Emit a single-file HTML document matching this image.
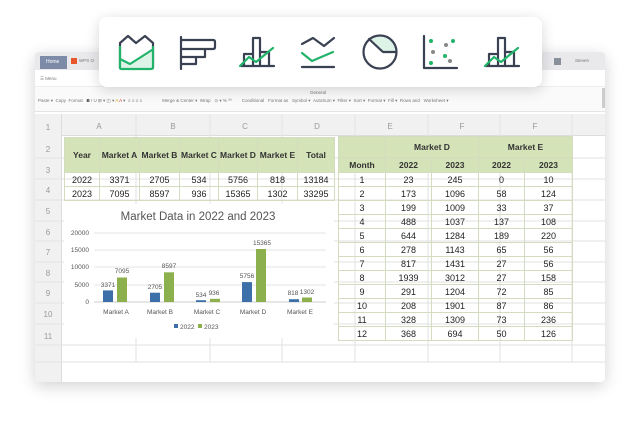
<!DOCTYPE html>
<html><head><meta charset="utf-8"><style>
*{margin:0;padding:0;box-sizing:border-box}
body{width:640px;height:427px;background:#fff;position:relative;overflow:hidden;font-family:"Liberation Sans",sans-serif}
.abs{position:absolute}
.win{left:35px;top:52px;width:570px;height:330px;background:#fff;border-radius:4px;box-shadow:0 4px 16px rgba(0,0,0,.18);overflow:hidden}
.tb{font-size:4.5px;color:#777;position:absolute;white-space:nowrap}
table{border-collapse:collapse;position:absolute;font-size:9px;color:#222;table-layout:fixed}
td{border:1px solid #d3dcc0;text-align:center;padding:0;height:14px;white-space:nowrap;overflow:hidden}
.g td{background:#d5e3b8;font-weight:bold;color:#333;font-size:8.5px}
</style></head><body>
<div class="abs win">
  <div class="abs" style="left:0;top:0;width:570px;height:18px;background:#e9e9ec"></div>
  <div class="abs" style="left:5px;top:4px;width:27px;height:13px;background:#7d8aa8;color:#fff;font-size:5px;padding:3px 0 0 6px">Home</div>
  <div class="abs" style="left:36px;top:6px;width:6px;height:6px;background:#e8572c"></div>
  <div class="tb" style="left:44px;top:6px">WPS O</div>
  <div class="abs" style="left:519px;top:6px;width:7px;height:7px;background:#8a8f9c"></div>
  <div class="tb" style="left:540px;top:6px">Steven</div>
  <div class="tb" style="left:5px;top:24px">☰ Menu</div>
  <div class="abs" style="left:0;top:34px;width:570px;height:26px;background:#fafafa;border-top:1px solid #eee;border-bottom:1px solid #e4e4e4"></div>
  <div class="tb" style="left:3px;top:46px">Paste ▾ &nbsp;Copy &nbsp;Format &nbsp;&nbsp;<b style="color:#222">B</b> I U ⊞ ▾ ◫ ▾ <span style="color:#d4a800">A</span> <span style="color:#d33">A</span> ▾ &nbsp;≡ ≡ ≡ ≡ &nbsp;&nbsp;&nbsp;&nbsp;&nbsp;&nbsp;&nbsp;&nbsp;&nbsp;&nbsp;&nbsp;&nbsp;&nbsp;&nbsp;&nbsp;Merge &amp; Center ▾ &nbsp;Wrap &nbsp;&nbsp;⊙ ▾ % ⁰⁰ &nbsp;&nbsp;&nbsp;&nbsp;&nbsp;&nbsp;&nbsp;Conditional &nbsp;&nbsp;Format as &nbsp;&nbsp;Symbol ▾ &nbsp;AutoSum ▾ &nbsp;Filter ▾ &nbsp;Sort ▾ &nbsp;Format ▾ &nbsp;Fill ▾ &nbsp;Rows and &nbsp;&nbsp;Worksheet ▾</div>
  <div class="tb" style="left:275px;top:38px">General</div>
  <div class="abs" style="left:567px;top:36px;width:3px;height:20px;background:#ccc"></div>
  <div class="abs" style="left:0;top:62px;width:570px;height:22px;background:#f1f1f1;border-bottom:1px solid #ddd"></div>
  <div class="abs" style="left:0;top:62px;width:27px;height:268px;background:#f1f1f1;border-right:1px solid #ddd"></div>
  <svg class="abs" style="left:0;top:0" width="570" height="330">
    <g stroke="#e2e2e2" stroke-width="1">
      <line x1="101" y1="62" x2="101" y2="310"/><line x1="175" y1="62" x2="175" y2="310"/><line x1="247" y1="62" x2="247" y2="310"/><line x1="320" y1="62" x2="320" y2="310"/><line x1="393" y1="62" x2="393" y2="310"/><line x1="465" y1="62" x2="465" y2="310"/><line x1="537" y1="62" x2="537" y2="310"/>
      <line x1="0" y1="106" x2="570" y2="106"/><line x1="0" y1="127" x2="570" y2="127"/><line x1="0" y1="148" x2="570" y2="148"/><line x1="0" y1="169" x2="570" y2="169"/><line x1="0" y1="189" x2="570" y2="189"/><line x1="0" y1="210" x2="570" y2="210"/><line x1="0" y1="230" x2="570" y2="230"/><line x1="0" y1="251" x2="570" y2="251"/><line x1="0" y1="272" x2="570" y2="272"/><line x1="0" y1="293" x2="570" y2="293"/><line x1="0" y1="310" x2="570" y2="310"/>
    </g>
    <g font-size="8" fill="#999" text-anchor="middle" font-family="Liberation Sans">
      <text x="64" y="77">A</text><text x="138" y="77">B</text><text x="210" y="77">C</text><text x="282" y="77">D</text><text x="355" y="77">E</text><text x="427" y="77">F</text><text x="500" y="77">F</text>
      <text x="13" y="78">1</text><text x="13" y="100">2</text><text x="13" y="121">3</text><text x="13" y="141">4</text><text x="13" y="162">5</text><text x="13" y="183">6</text><text x="13" y="203">7</text><text x="13" y="224">8</text><text x="13" y="244">9</text><text x="13" y="265">10</text><text x="13" y="287">11</text>
    </g>
  </svg>
</div>
<table style="left:64px;top:137px;width:270px">
<colgroup><col style="width:35px"><col style="width:40px"><col style="width:40px"><col style="width:39px"><col style="width:39px"><col style="width:40px"><col style="width:37px"></colgroup>
<tr class="g"><td style="height:35px">Year</td><td>Market A</td><td>Market B</td><td>Market C</td><td>Market D</td><td>Market E</td><td>Total</td></tr>
<tr><td>2022</td><td>3371</td><td>2705</td><td>534</td><td>5756</td><td>818</td><td>13184</td></tr>
<tr><td>2023</td><td>7095</td><td>8597</td><td>936</td><td>15365</td><td>1302</td><td>33295</td></tr>
</table>
<svg class="abs" style="left:64px;top:204px;background:#fff" width="270" height="134" font-family="Liberation Sans">
  <text x="134" y="16" font-size="11.5" fill="#555" text-anchor="middle">Market Data in 2022 and 2023</text>
  <g stroke="#e6e6e6"><line x1="30" y1="29" x2="262" y2="29"/><line x1="30" y1="46" x2="262" y2="46"/><line x1="30" y1="63" x2="262" y2="63"/><line x1="30" y1="81" x2="262" y2="81"/><line x1="30" y1="98" x2="262" y2="98" stroke="#ccc"/></g>
  <g font-size="6.5" fill="#555" text-anchor="end"><text x="25" y="31">20000</text><text x="25" y="48">15000</text><text x="25" y="65">10000</text><text x="25" y="83">5000</text><text x="25" y="100">0</text></g>
  <g fill="#3d6fa8"><rect x="39" y="86.4" width="10" height="11.6"/><rect x="86" y="88.7" width="10" height="9.3"/><rect x="132" y="96.2" width="10" height="1.8"/><rect x="178" y="78.1" width="10" height="19.9"/><rect x="225" y="95.2" width="10" height="2.8"/></g>
  <g fill="#8db04e"><rect x="53" y="73.5" width="10" height="24.5"/><rect x="100" y="68.3" width="10" height="29.7"/><rect x="146" y="94.8" width="10" height="3.2"/><rect x="192" y="45" width="10" height="53"/><rect x="238" y="93.5" width="10" height="4.5"/></g>
  <g font-size="6.5" fill="#555" text-anchor="middle">
    <text x="44" y="83">3371</text><text x="58" y="69">7095</text><text x="91" y="85">2705</text><text x="105" y="64">8597</text><text x="137" y="93">534</text><text x="150" y="91">936</text><text x="183" y="74">5756</text><text x="198" y="41">15365</text><text x="229" y="91">818</text><text x="243" y="90">1302</text>
    <text x="52" y="110">Market A</text><text x="96" y="110">Market B</text><text x="143" y="110">Market C</text><text x="189" y="110">Market D</text><text x="236" y="110">Market E</text>
  </g>
  <rect x="110" y="120" width="4" height="4" fill="#3d6fa8"/><text x="116" y="125" font-size="6.5" fill="#555">2022</text>
  <rect x="134" y="120" width="4" height="4" fill="#8db04e"/><text x="140" y="125" font-size="6.5" fill="#555">2023</text>
</svg>
<table style="left:338px;top:136px;width:234px">
<colgroup><col style="width:47px"><col style="width:46px"><col style="width:47px"><col style="width:46px"><col style="width:48px"></colgroup>
<tr class="g"><td style="height:21px;border-bottom:none"></td><td colspan="2" style="border-bottom:none">Market D</td><td colspan="2" style="border-bottom:none">Market E</td></tr>
<tr class="g"><td style="height:15px">Month</td><td>2022</td><td>2023</td><td>2022</td><td>2023</td></tr>
<tr><td>1</td><td>23</td><td>245</td><td>0</td><td>10</td></tr>
<tr><td>2</td><td>173</td><td>1096</td><td>58</td><td>124</td></tr>
<tr><td>3</td><td>199</td><td>1009</td><td>33</td><td>37</td></tr>
<tr><td>4</td><td>488</td><td>1037</td><td>137</td><td>108</td></tr>
<tr><td>5</td><td>644</td><td>1284</td><td>189</td><td>220</td></tr>
<tr><td>6</td><td>278</td><td>1143</td><td>65</td><td>56</td></tr>
<tr><td>7</td><td>817</td><td>1431</td><td>27</td><td>56</td></tr>
<tr><td>8</td><td>1939</td><td>3012</td><td>27</td><td>158</td></tr>
<tr><td>9</td><td>291</td><td>1204</td><td>72</td><td>85</td></tr>
<tr><td>10</td><td>208</td><td>1901</td><td>87</td><td>86</td></tr>
<tr><td>11</td><td>328</td><td>1309</td><td>73</td><td>236</td></tr>
<tr><td>12</td><td>368</td><td>694</td><td>50</td><td>126</td></tr>
</table>
<div class="abs" style="left:99px;top:17px;width:443px;height:70px;background:#fff;border-radius:8px;box-shadow:0 3px 14px rgba(0,0,0,.16)"></div>
<svg class="abs" style="left:99px;top:17px" width="443" height="70" fill="none" stroke-width="2.2" stroke-linejoin="round" stroke-linecap="round">
  <!-- 1 area -->
  <path d="M21 51 V26 L29 19 L37 26 L46 19 L54 26 V51" stroke="#3a4152"/>
  <path d="M21 42 L31 47 L53 33 V52 H21 Z" fill="#def3e7" stroke="none"/>
  <path d="M21 42 L31 47 L53 33 M21 30 V51 Q21 52 23 52 H52 Q54 52 54 50 V30" stroke="#22b36a"/>
  <!-- 2 hbar -->
  <path d="M82 20 V52 M82 23 H114 Q116 23 116 25 V30 Q116 32 114 32 H82 M82 32 H106 V40 H82 M82 40 H97 V47 H82" stroke="#3a4152"/>
  <!-- 3 bar+line -->
  <path d="M142 49 H175 M145 49 V37 H154 V49 M154 49 V21 H161 V49 M161 49 V35 H170 V49" stroke="#3a4152"/>
  <path d="M141 49 L150 40 L157 45 L174 31" stroke="#22b36a"/>
  <!-- 4 lines -->
  <path d="M203 27 L214 21 L225 29 L235 21 M203 50 H235" stroke="#3a4152"/>
  <path d="M203 36 L213 44 L234 35" stroke="#22b36a"/>
  <!-- 5 pie -->
  <path d="M270 22 A16.5 16.5 0 0 1 297.5 35 H284 Z" fill="#def3e7" stroke="none"/>
  <circle cx="281" cy="35" r="16.5" stroke="#3a4152"/>
  <path d="M270 22 L284 35 H297" stroke="#3a4152"/>
  <!-- 6 scatter -->
  <path d="M325 19 V51 H358" stroke="#3a4152"/>
  <g stroke="none"><circle cx="332" cy="24" r="2" fill="#22b36a"/><circle cx="354" cy="24" r="2" fill="#22b36a"/><circle cx="346" cy="39" r="2" fill="#22b36a"/><circle cx="332" cy="46" r="2" fill="#22b36a"/><circle cx="347" cy="28" r="2" fill="#888"/><circle cx="334" cy="35" r="2" fill="#888"/><circle cx="351" cy="44" r="2" fill="#888"/></g>
  <!-- 7 bar+line -->
  <path d="M387 49 H420 M390 49 V37 H399 V49 M399 49 V21 H406 V49 M406 49 V35 H415 V49" stroke="#3a4152"/>
  <path d="M386 49 L395 40 L402 45 L419 31" stroke="#22b36a"/>
</svg>
</body></html>
